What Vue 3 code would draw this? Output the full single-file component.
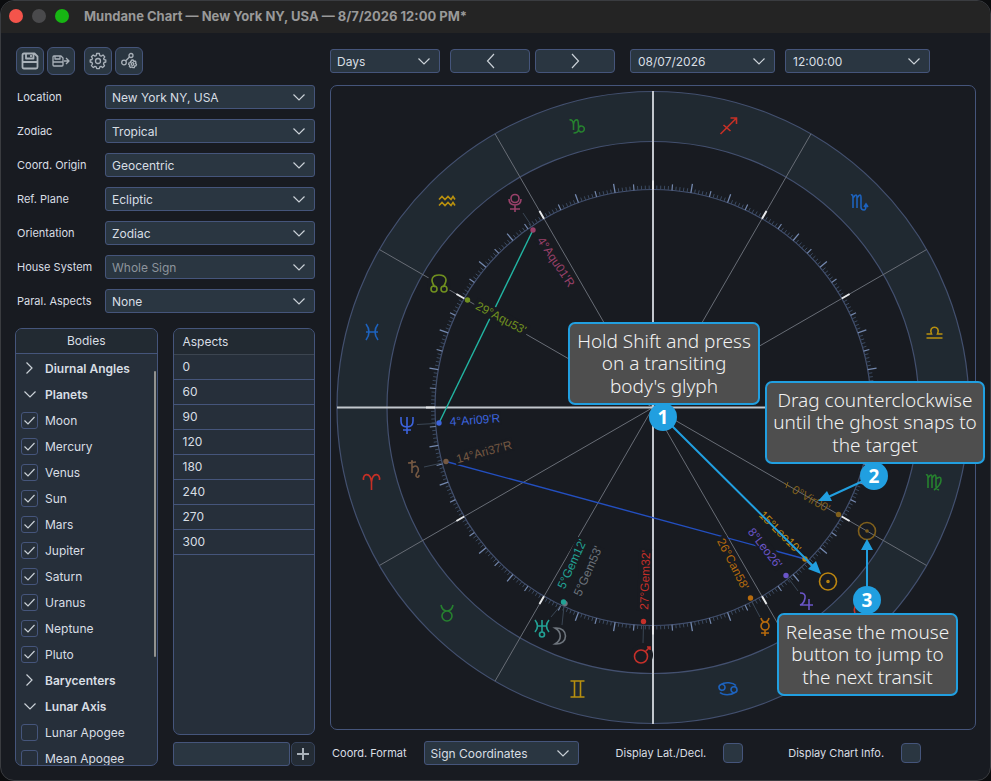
<script setup>
import { ref } from 'vue'

const fields = ref([
  { id: 'location', label: 'Location', value: 'New York NY, USA' },
  { id: 'zodiac', label: 'Zodiac', value: 'Tropical' },
  { id: 'origin', label: 'Coord. Origin', value: 'Geocentric' },
  { id: 'plane', label: 'Ref. Plane', value: 'Ecliptic' },
  { id: 'orientation', label: 'Orientation', value: 'Zodiac' },
  { id: 'houses', label: 'House System', value: 'Whole Sign', disabled: true },
  { id: 'parallels', label: 'Paral. Aspects', value: 'None' },
])

const rows = ref([
  { name: 'Diurnal Angles', group: true, open: false },
  { name: 'Planets', group: true, open: true },
  ...['Moon', 'Mercury', 'Venus', 'Sun', 'Mars', 'Jupiter', 'Saturn', 'Uranus', 'Neptune', 'Pluto']
    .map((name) => ({ name, on: true })),
  { name: 'Barycenters', group: true, open: false },
  { name: 'Lunar Axis', group: true, open: true },
  { name: 'Lunar Apogee', on: false },
  { name: 'Mean Apogee', on: false },
])

const aspects = [0, 60, 90, 120, 180, 240, 270, 300]
const newAspect = ref('')
const showLat = ref(false)
const showInfo = ref(false)

/* Wheel geometry: 0 Aries at the left, longitudes run counterclockwise. */
const CX = 653
const CY = 407.5
const R_OUT = 316
const R_BAND = 266
const R_TICK = 218
const at = (lon, r) => {
  const a = (lon * Math.PI) / 180
  return [CX - r * Math.cos(a), CY + r * Math.sin(a)]
}
const seg = (lon, r1, r2) => {
  const [x1, y1] = at(lon, r1)
  const [x2, y2] = at(lon, r2)
  return `M${x1.toFixed(2)} ${y1.toFixed(2)}L${x2.toFixed(2)} ${y2.toFixed(2)}`
}
const range = (n, step) => Array.from({ length: n }, (_, i) => i * step)
const minorTicks = range(360, 1).filter((d) => d % 5).map((d) => seg(d, R_TICK, R_TICK + 4)).join('')
const midTicks = range(72, 5).filter((d) => d % 10).map((d) => seg(d, R_TICK, R_TICK + 6)).join('')
const majorTicks = range(36, 10).filter((d) => d % 30).map((d) => seg(d, R_TICK, R_TICK + 9)).join('')
const signTicks = range(12, 30).map((d) => seg(d, R_TICK, R_TICK + 9)).join('')
const cusps = range(12, 30).filter((d) => d % 90).map((d) => seg(d, 0, R_OUT)).join('')

const RED = '#c63026'
const YEL = '#b8900f'
const GRN = '#26812f'
const BLU = '#1d62bd'
const signs = [
  { x: 371.5, y: 482, c: RED, d: 'M-8 -2C-9 -9 -1 -10 0 0V8M8 -2C9 -9 1 -10 0 0' },
  { x: 447, y: 613, c: GRN, d: 'M-6 -8C-5 -3 -3 -2 0 -2C3 -2 5 -3 6 -8M0 -2A5 5 0 1 1 0 8A5 5 0 1 1 0 -2' },
  { x: 577.5, y: 689, c: YEL, d: 'M-7 -8H7M-7 8H7M-3 -8V8M3 -8V8' },
  { x: 728, y: 688.5, c: BLU, d: 'M8 -3C5 -6 -3 -7 -7 -4A3 3 0 1 0 -3 -1A3 3 0 0 0 -7 -4M-8 4C-5 7 3 7 7 4A3 3 0 1 0 3 1A3 3 0 0 0 7 4' },
  { x: 859, y: 614, c: RED, d: 'M-4 0A3 3 0 1 0 -4 6A3 3 0 1 0 -4 0C-8 -12 6 -12 4 -3C3 1 0 7 6 7' },
  { x: 934, y: 482, c: GRN, d: 'M-8 -7Q-6 -8 -6 -4V6M-6 -4Q-2 -10 -2 -4V6M-2 -4Q2 -10 2 -4V4Q2 7 5 8M2 -3Q7 -7 7 -2Q7 3 0 8' },
  { x: 934.5, y: 333, c: YEL, d: 'M-8 5H8M-8 1H-3C-7 -8 7 -8 3 1H8' },
  { x: 859, y: 202, c: BLU, d: 'M-8 -7Q-6 -8 -6 -4V6M-6 -4Q-2 -10 -2 -4V6M-2 -4Q2 -10 2 -4V5Q2 8 5 8Q7 8 7 3M5 5L7 2L9 5' },
  { x: 728.5, y: 126, c: RED, d: 'M-8 8L8 -8M2 -8H8V-2M-5 -1L2 5' },
  { x: 577.5, y: 126, c: GRN, d: 'M-8 -6Q-5 -7 -4 -2V4M-4 -2Q-3 -7 0 -6Q1 -5 1 3Q1 7 -4 7M1 2A3 3 0 1 1 1 4' },
  { x: 447, y: 201.5, c: YEL, d: 'M-8 -2L-5 -5L-2 -2L1 -5L4 -2L6 -5L8 -2M-8 4L-5 1L-2 4L1 1L4 4L6 1L8 4' },
  { x: 372, y: 332, c: BLU, d: 'M-6 -8Q0 0 -6 8M6 -8Q0 0 6 8M-6 0H6' },
]

const bodies = [
  {
    name: 'Pluto', c: '#99416a', dot: [533, 230], text: "4°Aqu01'R", tx: 556, ty: 262, rot: 56, w: 60,
    gx: 515, gy: 203, leader: 'M523 213L531 225',
    d: 'M-6 -4Q-6 2 0 2Q6 2 6 -4M0 2V9M-5 6H5M0 -8.500A4 4 0 1 1 0 -0.500A4 4 0 1 1 0 -8.500',
  },
  {
    name: 'North Node', c: '#70901f', dot: [467.5, 300], text: "29°Aqu53'", tx: 501, ty: 318, rot: 28, w: 60,
    gx: 439, gy: 284, leader: '', clear: 12,
    d: 'M-4 3C-10 -5 -6 -9 0 -9C6 -9 10 -5 4 3M-5 2A3 3 0 1 0 -5 8A3 3 0 1 0 -5 2M5 2A3 3 0 1 0 5 8A3 3 0 1 0 5 2',
  },
  {
    name: 'Neptune', c: '#3c63dd', dot: [439, 423], text: "4°Ari09'R", tx: 475, ty: 420, rot: -4, w: 52,
    gx: 407, gy: 425, leader: 'M417 424.500L435 423.500',
    d: 'M-6 -8V-4Q-6 2 0 2Q6 2 6 -4V-8M0 -8V9M-4 5H4',
  },
  {
    name: 'Saturn', c: '#745842', dot: [446, 461.5], text: "14°Ari37'R", tx: 484, ty: 452, rot: -15, w: 60,
    gx: 414, gy: 469, leader: 'M424 467L442 463',
    d: 'M-2 -9V4M-6 -6L2 -7M-2 -1Q2 -5 4 -1Q5 2 3 4Q1 7 3 8Q5 9 5 6',
  },
  {
    name: 'Moon', c: '#6d747c', dot: [565, 603.5], text: "5°Gem53'", tx: 588, ty: 571, rot: -66, w: 54,
    gx: 560, gy: 636, leader: 'M562 625L564 606',
    d: 'M-5 -8C9 -9 9 9 -5 8C2 4 2 -4 -5 -8Z',
  },
  {
    name: 'Uranus', c: '#22a295', dot: [563.5, 602], text: "5°Gem12'", tx: 572, ty: 564, rot: -65, w: 54,
    gx: 542, gy: 628, leader: 'M551 617L561 605',
    d: 'M-7 -8Q-2 -2 -7 4M7 -8Q2 -2 7 4M-4 -2H4M0 -8V4M0 4A2.500 2.500 0 1 1 0 9A2.500 2.500 0 1 1 0 4',
  },
  {
    name: 'Mars', c: '#c5302a', dot: [643.5, 621.5], text: "27°Gem32'", tx: 645, ty: 580, rot: -88, w: 62,
    gx: 642, gy: 655, leader: 'M643 643L643.500 625', clear: 11,
    d: 'M-1 -5A6.500 6.500 0 1 1 -1 8A6.500 6.500 0 1 1 -1 -5M3 -3L8 -8M5 -8L8 -8V-5',
  },
  {
    name: 'Mercury', c: '#b66a0d', dot: [750.5, 598], text: "26°Can58'", tx: 733, ty: 564, rot: 63, w: 60,
    gx: 765, gy: 627, leader: 'M752 602L760 617',
    d: 'M-4 -9Q-3 -5 0 -5Q3 -5 4 -9M0 -5A4 4 0 1 1 0 3A4 4 0 1 1 0 -5M0 3V9M-4 6H4',
  },
  {
    name: 'Jupiter', c: '#6a55c8', dot: [786, 575.5], text: "8°Leo26'", tx: 765, ty: 548, rot: 52, w: 50,
    gx: 806, gy: 601, leader: 'M789 579L798 591',
    d: 'M-6 -8Q0 -8 -1 -3Q-2 3 -6 4H7M3 -2V9',
  },
  {
    name: 'Sun', c: '#bb8510', dot: [805, 559], text: "15°Leo10'", tx: 780, ty: 532, rot: 45, w: 0,
    gx: 828, gy: 581.5, leader: '',
    d: 'M0 -8.500A8.500 8.500 0 1 1 0 8.500A8.500 8.500 0 1 1 0 -8.500M0 -1A1 1 0 1 1 0 1A1 1 0 1 1 0 -1',
  },
  {
    name: 'Sun ghost', c: '#80601c', dot: [838.5, 514.5], text: "0°Vir00'", tx: 811, ty: 499, rot: 30, w: 0,
    gx: 867, gy: 531, leader: '',
    d: 'M0 -8.500A8.500 8.500 0 1 1 0 8.500A8.500 8.500 0 1 1 0 -8.500M0 -1A1 1 0 1 1 0 1A1 1 0 1 1 0 -1',
  },
]

const callouts = [
  { x: 569, y: 323, w: 190, lines: ['Hold Shift and press', 'on a transiting', "body's glyph"], n: 1, bx: 663, by: 417 },
  { x: 766, y: 382, w: 218, lines: ['Drag counterclockwise', 'until the ghost snaps to', 'the target'], n: 2, bx: 874, by: 476 },
  { x: 778, y: 614, w: 179, lines: ['Release the mouse', 'button to jump to', 'the next transit'], n: 3, bx: 867, by: 600 },
]
</script>

<template>
  <main class="window">
    <header class="titlebar">
      <span class="light red"></span>
      <span class="light grey"></span>
      <span class="light green"></span>
      <h1>Mundane Chart — New York NY, USA — 8/7/2026 12:00 PM*</h1>
    </header>

    <div class="content">
      <section class="side">
        <div class="tools">
          <button type="button" aria-label="Save">
            <svg width="18" height="18" viewBox="0 0 18 18" class="ico heavy"><path d="M3 1.500H13.500L16.500 4.500V15Q16.500 16.500 15 16.500H3Q1.500 16.500 1.500 15V3Q1.500 1.500 3 1.500ZM5 2V6.500H12.500V2M10 3V5M2 10H16" /></svg>
          </button>
          <button type="button" aria-label="Save as">
            <svg width="18" height="18" viewBox="0 0 18 18" class="ico"><path d="M2 4H9L11 6V13Q11 14 10 14H2Q1 14 1 13V5Q1 4 2 4ZM3 4V7H8V4M1 10H11M12 9H17M14 6L17 9L14 12" /></svg>
          </button>
          <button type="button" aria-label="Settings" class="apart">
            <svg width="18" height="18" viewBox="0 0 18 18" class="ico"><circle cx="9" cy="9" r="2.5" /><path d="M7.600 1.500H10.400L10.800 3.600L12.200 4.200L14 3L15.800 4.900L14.600 6.600L15.100 7.600L16.800 8V10L15 10.500L14.500 12L15.500 13.700L13.600 15.500L12 14.400L10.800 14.900L10.300 16.700H7.700L7.200 14.900L6 14.400L4.300 15.500L2.400 13.600L3.500 12L3 10.500L1.200 10V8L3 7.500L3.500 6.300L2.400 4.700L4.200 3L5.900 4.100L7.200 3.600Z" /></svg>
          </button>
          <button type="button" aria-label="Aspect settings">
            <svg width="18" height="18" viewBox="0 0 18 18" class="ico"><circle cx="11" cy="3.500" r="2" /><circle cx="4" cy="10.500" r="2.300" /><path d="M5.700 8.800L9.500 5" /><circle cx="12.500" cy="12" r="1.300" /><path d="M11.800 8H13.200L13.700 9.300L15.200 9L16 10.200L15.300 11.300L16.500 12.300L16 13.800L14.600 14L14.300 15.600H12.800L12 14.800L10.600 15.500L9.400 14.500L9.800 13.200L8.600 12.300L9 10.900L10.400 10.600L10.600 9.200L11.500 9.200Z" /></svg>
          </button>
        </div>

        <div class="fields">
          <div v-for="f in fields" :key="f.id" class="field">
            <label :for="f.id">{{ f.label }}</label>
            <div class="drop">
              <select :id="f.id" :disabled="f.disabled"><option>{{ f.value }}</option></select>
              <svg width="12" height="7" viewBox="0 0 12 7"><path d="M0.500 0.500L6 6L11.500 0.500" /></svg>
            </div>
          </div>
        </div>

        <div class="panels">
          <div class="panel bodies">
            <h2>Bodies</h2>
            <ul>
              <li v-for="r in rows" :key="r.name">
                <button v-if="r.group" type="button" class="group" @click="r.open = !r.open">
                  <span class="mark">
                    <svg v-if="r.open" width="12" height="7" viewBox="0 0 12 7"><path d="M0.500 0.500L6 6L11.500 0.500" /></svg>
                    <svg v-else width="7" height="12" viewBox="0 0 7 12"><path d="M0.500 0.500L6 6L0.500 11.500" /></svg>
                  </span>
                  {{ r.name }}
                </button>
                <label v-else class="body">
                  <span class="tick">
                    <input v-model="r.on" type="checkbox" />
                    <svg v-if="r.on" width="11" height="9" viewBox="0 0 11 9"><path d="M0.500 4.500L4 8L10.500 1" /></svg>
                  </span>
                  {{ r.name }}
                </label>
              </li>
            </ul>
            <span class="thumb"></span>
          </div>

          <div class="aspects">
            <div class="panel">
              <table>
                <thead><tr><th scope="col">Aspects</th></tr></thead>
                <tbody><tr v-for="a in aspects" :key="a"><td>{{ a }}</td></tr></tbody>
              </table>
            </div>
            <div class="adder">
              <input v-model="newAspect" type="text" aria-label="New aspect" />
              <button type="button" aria-label="Add aspect">
                <svg width="12" height="12" viewBox="0 0 12 12"><path d="M6 0V12M0 6H12" /></svg>
              </button>
            </div>
          </div>
        </div>
      </section>

      <section class="main">
        <div class="stepper">
          <div class="drop days">
            <select aria-label="Step unit"><option>Days</option></select>
            <svg width="12" height="7" viewBox="0 0 12 7"><path d="M0.500 0.500L6 6L11.500 0.500" /></svg>
          </div>
          <button type="button" class="step" aria-label="Previous">
            <svg width="9" height="16" viewBox="0 0 9 16"><path d="M8 1L1.500 8L8 15" /></svg>
          </button>
          <button type="button" class="step next" aria-label="Next">
            <svg width="9" height="16" viewBox="0 0 9 16"><path d="M1 1L7.500 8L1 15" /></svg>
          </button>
          <div class="drop date">
            <select aria-label="Date"><option>08/07/2026</option></select>
            <svg width="12" height="7" viewBox="0 0 12 7"><path d="M0.500 0.500L6 6L11.500 0.500" /></svg>
          </div>
          <div class="drop time">
            <select aria-label="Time"><option>12:00:00</option></select>
            <svg width="12" height="7" viewBox="0 0 12 7"><path d="M0.500 0.500L6 6L11.500 0.500" /></svg>
          </div>
        </div>

        <div class="chart">
          <svg viewBox="331 86 644 643" class="wheel">
            <circle :cx="CX" :cy="CY" :r="(R_OUT + R_BAND) / 2" class="band" />
            <circle :cx="CX" :cy="CY" :r="R_OUT" class="ring" />
            <circle :cx="CX" :cy="CY" :r="R_BAND" class="ring" />
            <circle :cx="CX" :cy="CY" :r="R_TICK" class="ring" />
            <path :d="minorTicks" class="t-minor" />
            <path :d="midTicks" class="t-mid" />
            <path :d="majorTicks" class="t-major" />
            <path :d="cusps" class="cusp" />
            <path d="M337 407.500H969M653 91V724" class="axis" />
            <path :d="signTicks" class="t-sign" />

            <path d="M533 230L439 423" stroke="#22b5a3" class="aspect" />
            <path d="M446 461.500L805 559" stroke="#234fc0" class="aspect" />

            <g v-for="s in signs" :key="s.c + s.x + s.y" :transform="`translate(${s.x} ${s.y})`">
              <path :d="s.d" :stroke="s.c" class="glyph" />
            </g>

            <g v-for="b in bodies" :key="b.name">
              <rect v-if="b.w" :x="-b.w / 2" y="-7" :width="b.w" height="13" class="clear" :transform="`translate(${b.tx} ${b.ty}) rotate(${b.rot})`" />
              <circle v-if="b.clear" :cx="b.gx" :cy="b.gy" :r="b.clear" class="clear" />
            </g>
            <g v-for="b in bodies" :key="b.name">
              <path :d="b.leader" class="leader" />
              <circle :cx="b.dot[0]" :cy="b.dot[1]" r="2.700" :fill="b.c" />
              <path :d="b.d" :stroke="b.c" class="glyph" :transform="`translate(${b.gx} ${b.gy})`" />
              <text x="0" y="4" :fill="b.c" class="pos" :transform="`translate(${b.tx} ${b.ty}) rotate(${b.rot})`">{{ b.text }}</text>
            </g>
            <path d="M784 483L790 487M788 482L786 488" stroke="#80601c" />

            <path d="M663 417L815 568M874 476L826 498M867 600V547" class="arrow" />
            <path d="M821 574L808 569L816 561ZM818 501L827 491L832 501ZM867 539L861 550H873Z" class="head" />
            <g v-for="c in callouts" :key="c.n">
              <rect :x="c.x" :y="c.y" :width="c.w" height="81" rx="6" class="note" />
              <text v-for="(l, i) in c.lines" :key="l" :x="c.x + c.w / 2" :y="c.y + 25 + Math.floor(i * 22.5)" class="note-text">{{ l }}</text>
              <circle :cx="c.bx" :cy="c.by" r="14" class="head" />
              <text :x="c.bx" :y="c.by + 7" class="badge">{{ c.n }}</text>
            </g>
          </svg>
        </div>

        <div class="footer">
          <label for="format">Coord. Format</label>
          <div class="drop format">
            <select id="format"><option>Sign Coordinates</option></select>
            <svg width="12" height="7" viewBox="0 0 12 7"><path d="M0.500 0.500L6 6L11.500 0.500" /></svg>
          </div>
          <label for="lat" class="lat">Display Lat./Decl.</label>
          <input id="lat" v-model="showLat" type="checkbox" class="box" />
          <label for="info" class="info">Display Chart Info.</label>
          <input id="info" v-model="showInfo" type="checkbox" class="box" />
        </div>
      </section>
    </div>
  </main>
</template>

<style>
body { margin: 0; background: #0c0d0f; }
</style>

<style scoped>
* { box-sizing: border-box; }
.window {
  min-height: 100vh;
  background: #181b21;
  border: 1px solid #3a3c40;
  border-radius: 14px;
  overflow: hidden;
  display: flex;
  flex-direction: column;
  font-family: Inter, "Liberation Sans", sans-serif;
  color: #d8dee4;
}
.titlebar {
  height: 32px;
  background: #242424;
  display: flex;
  align-items: center;
  gap: 9px;
  padding: 0 8px 2px;
}
.light { width: 14px; height: 14px; border-radius: 50%; }
.red { background: #f4544b; }
.grey { background: #4a4a4c; }
.green { background: #17b513; }
h1 { margin: 0 0 0 6px; font-size: 13px; font-weight: 700; color: #999; white-space: nowrap; }

.content {
  flex: 1;
  display: grid;
  grid-template-columns: 300px minmax(0, 1fr);
  gap: 15px;
  padding: 14px;
}
.side { display: flex; flex-direction: column; min-width: 0; min-height: 0; }
button, select, input { font: inherit; color: inherit; margin: 0; padding: 0; }
svg { display: block; fill: none; }

.tools { display: flex; gap: 3px; padding-left: 1px; margin-bottom: 10px; }
.tools button {
  width: 28px;
  height: 28px;
  display: grid;
  place-items: center;
  background: #2a3641;
  border: 1px solid #45557b;
  border-radius: 6px;
}
.tools .apart { margin-left: 6px; }
.ico { stroke: #a9b1b9; stroke-width: 1.3; stroke-linejoin: round; }
.ico.heavy { stroke-width: 1.8; }

.fields { display: flex; flex-direction: column; gap: 10px; margin-bottom: 15px; }
.field { display: grid; grid-template-columns: 90px minmax(0, 1fr); align-items: center; }
label { font-size: 11px; white-space: nowrap; }
.field label { padding-left: 2px; }
.drop { position: relative; font-size: 12px; }
.drop select {
  display: block;
  appearance: none;
  width: 100%;
  height: 24px;
  padding: 0 28px 0 6px;
  background: #2a3641;
  border: 1px solid #45557b;
  border-radius: 3px;
}
.drop select:disabled { color: #8d949c; opacity: 1; }
.drop svg { position: absolute; right: 10px; top: 9px; pointer-events: none; }
.drop svg, .mark svg, .step svg, .tick svg { stroke: #c9d0d6; stroke-width: 1.2; }

.panels {
  flex: 1 1 0px;
  min-height: 300px;
  display: grid;
  grid-template-columns: minmax(0, 1fr) minmax(0, 1fr);
  grid-template-rows: minmax(0, 1fr);
  gap: 15px;
}
.panel { background: #262f3a; border: 1px solid #45557b; border-radius: 7px; overflow: hidden; min-height: 0; }
.bodies { position: relative; display: flex; flex-direction: column; }
h2 { margin: 0; font-size: 12px; font-weight: 400; line-height: 24px; text-align: center; background: #222a32; border-bottom: 1px solid #45557b; }
ul { list-style: none; margin: 0; padding: 1px 0 0; flex: 1 1 0px; min-height: 0; overflow-y: auto; scrollbar-width: none; }
li { height: 26px; }
.group, .body { display: flex; align-items: center; gap: 7px; height: 26px; padding-left: 5px; font-size: 12px; }
.group { width: 100%; background: none; border: 0; font-weight: 600; white-space: nowrap; }
.mark { width: 17px; height: 17px; display: grid; place-items: center; }
.tick { display: grid; place-items: center; }
.tick > * { grid-area: 1 / 1; }
.tick svg { pointer-events: none; position: relative; }
.tick input { appearance: none; width: 17px; height: 17px; border: 1px solid #45557b; border-radius: 3px; }
.thumb { position: absolute; right: 1px; top: 42px; width: 2px; height: 286px; background: #92928f; border-radius: 1px; }

.aspects { display: flex; flex-direction: column; gap: 7px; min-width: 0; min-height: 0; }
.aspects .panel { flex: 1 1 0px; }
table { width: 100%; border-collapse: collapse; font-size: 12px; }
th, td { height: 25px; padding: 0 9px; text-align: left; font-weight: 400; border-bottom: 1px solid #45557b; }
th { background: #222a32; border-bottom-color: #3c4550; }
.adder { display: flex; gap: 1px; }
.adder input { flex: 1; min-width: 0; height: 24px; background: #2a3641; border: 1px solid #45557b; border-radius: 3px; padding: 0 6px; font-size: 12px; }
.adder button { width: 24px; height: 24px; display: grid; place-items: center; background: #242c35; border: 1px solid #36435c; border-radius: 5px; }
.adder svg { stroke: #a9b1b9; stroke-width: 2; }

.main { min-width: 0; }
.stepper { display: flex; padding: 2px 0 12px; }
.days { width: 110px; }
.step { width: 80px; height: 24px; margin-left: 10px; display: grid; place-items: center; background: #2a3641; border: 1px solid #45557b; border-radius: 4px; }
.step.next { margin-left: 5px; }
.date { width: 145px; margin-left: 15px; }
.time { width: 145px; margin-left: 10px; }
.date select, .time select { padding-left: 7px; }

.chart { border: 1px solid #45557b; border-radius: 7px; }
.wheel { width: 100%; height: auto; overflow: visible; }
.band { stroke: #202931; stroke-width: 50; }
.ring { stroke: #43506f; stroke-width: 1.2; }
.t-minor { stroke: #3b4b62; stroke-width: 1; }
.t-mid { stroke: #7387ac; stroke-width: 1.2; }
.t-major { stroke: #7388ae; stroke-width: 1.3; }
.t-sign { stroke: #e6e8ea; stroke-width: 2; }
.cusp { stroke: #686d76; stroke-width: 1; }
.axis { stroke: #c2c7cd; stroke-width: 2; }
.aspect { stroke-width: 1.4; }
.leader { stroke: #3a4654; stroke-width: 1; }
.clear { fill: #181b21; }
.glyph { stroke-width: 1.6; }
.pos { font-family: "Liberation Sans", sans-serif; font-size: 12px; text-anchor: middle; }
.arrow { stroke: #219fe0; stroke-width: 2; }
.head { fill: #219fe0; }
.note { fill: #4e4e4e; stroke: #219fe0; stroke-width: 2; }
.note-text { font-family: "Noto Sans", sans-serif; font-size: 19px; font-weight: 300; fill: #f2f2f2; text-anchor: middle; }
.badge { font-family: "Noto Sans", sans-serif; font-size: 19px; font-weight: 700; fill: #fff; text-anchor: middle; }

.footer { display: flex; align-items: center; padding: 11px 0 0 2px; }
.format { width: 155px; margin-left: 17px; }
.lat { margin-left: 37px; }
.info { margin-left: 45px; }
.box { appearance: none; width: 20px; height: 20px; margin-left: 17px; background: #2a3641; border: 1px solid #45557b; border-radius: 4px; }
</style>
